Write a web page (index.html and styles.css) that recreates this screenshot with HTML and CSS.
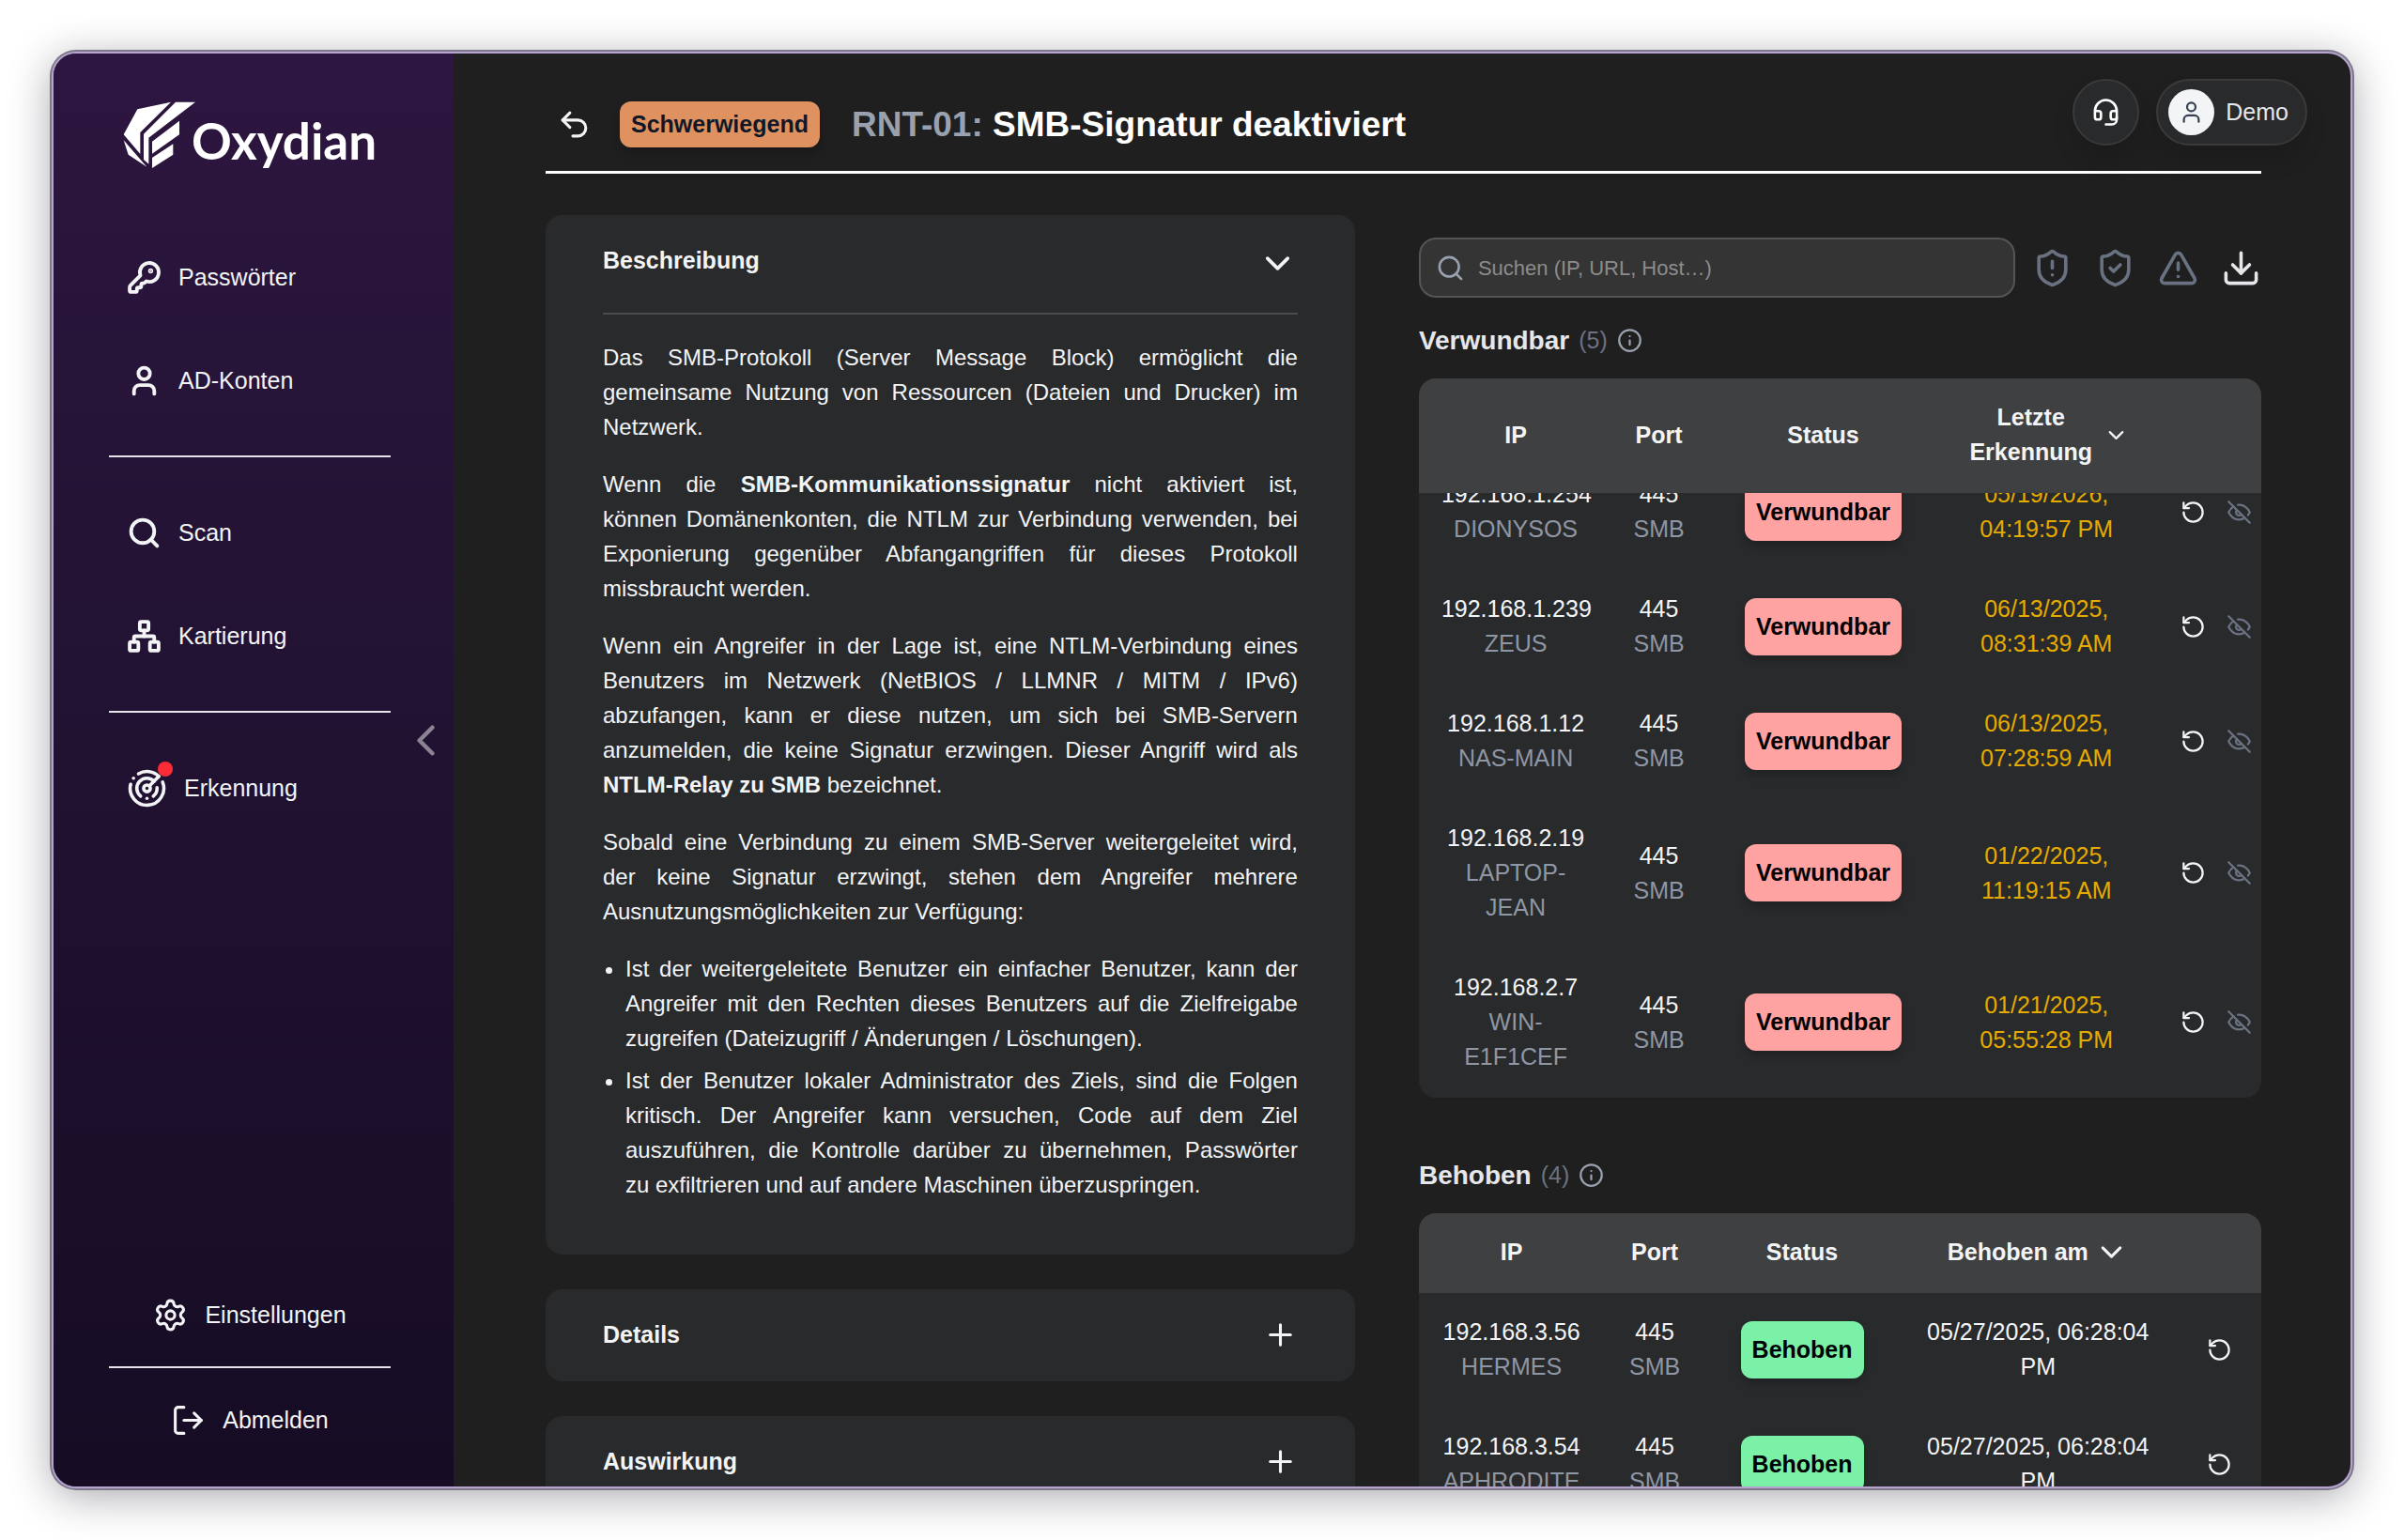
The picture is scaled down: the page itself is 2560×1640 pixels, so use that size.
FILE: index.html
```html
<!DOCTYPE html>
<html lang="de">
<head>
  <meta charset="UTF-8" />
  <meta name="viewport" content="width=device-width, initial-scale=1.0" />
  <title>Oxydian – SMB-Signatur deaktiviert</title>
  <link rel="stylesheet" href="styles.css">
</head>
<body>

  <svg class="sprite" aria-hidden="true">
    <symbol id="i-key" viewBox="0 0 24 24">
      <path d="M2.586 17.414A2 2 0 0 0 2 18.828V21a1 1 0 0 0 1 1h3a1 1 0 0 0 1-1v-1a1 1 0 0 1 1-1h1a1 1 0 0 0 1-1v-1a1 1 0 0 1 1-1h.172a2 2 0 0 0 1.414-.586l.814-.814a6.5 6.5 0 1 0-4-4z" />
      <circle cx="16.5" cy="7.5" r=".5" fill="currentColor" />
    </symbol>
    <symbol id="i-user" viewBox="0 0 24 24">
      <path d="M19 21v-2a4 4 0 0 0-4-4H9a4 4 0 0 0-4 4v2" />
      <circle cx="12" cy="7" r="4" />
    </symbol>
    <symbol id="i-search" viewBox="0 0 24 24">
      <circle cx="11" cy="11" r="8" />
      <path d="m21 21-4.35-4.35" />
    </symbol>
    <symbol id="i-network" viewBox="0 0 24 24">
      <rect x="16" y="16" width="6" height="6" rx="1" />
      <rect x="2" y="16" width="6" height="6" rx="1" />
      <rect x="9" y="2" width="6" height="6" rx="1" />
      <path d="M5 16v-3a1 1 0 0 1 1-1h12a1 1 0 0 1 1 1v3" />
      <path d="M12 12V8" />
    </symbol>
    <symbol id="i-radar" viewBox="0 0 24 24">
      <path d="M19.07 4.93A10 10 0 0 0 6.99 3.34" />
      <path d="M4 6h.01" />
      <path d="M2.29 9.62A10 10 0 1 0 21.31 8.35" />
      <path d="M16.24 7.76A6 6 0 1 0 8.23 16.67" />
      <path d="M12 18h.01" />
      <path d="M17.99 11.66A6 6 0 0 1 15.77 16.67" />
      <circle cx="12" cy="12" r="2" />
      <path d="m13.41 10.59 5.66-5.66" />
    </symbol>
    <symbol id="i-settings" viewBox="0 0 24 24">
      <path d="M9.671 4.136a2.34 2.34 0 0 1 4.659 0 2.34 2.34 0 0 0 3.319 1.915 2.34 2.34 0 0 1 2.33 4.033 2.34 2.34 0 0 0 0 3.831 2.34 2.34 0 0 1-2.33 4.033 2.34 2.34 0 0 0-3.319 1.915 2.34 2.34 0 0 1-4.659 0 2.34 2.34 0 0 0-3.32-1.915 2.34 2.34 0 0 1-2.33-4.033 2.34 2.34 0 0 0 0-3.831A2.34 2.34 0 0 1 6.35 6.051a2.34 2.34 0 0 0 3.319-1.915" />
      <circle cx="12" cy="12" r="3" />
    </symbol>
    <symbol id="i-logout" viewBox="0 0 24 24">
      <path d="M9 21H5a2 2 0 0 1-2-2V5a2 2 0 0 1 2-2h4" />
      <path d="m16 17 5-5-5-5" />
      <path d="M21 12H9" />
    </symbol>
    <symbol id="i-left" viewBox="0 0 24 24"><path d="m15 18-6-6 6-6" /></symbol>
    <symbol id="i-down" viewBox="0 0 24 24"><path d="m6 9 6 6 6-6" /></symbol>
    <symbol id="i-plus" viewBox="0 0 24 24"><path d="M5 12h14M12 5v14" /></symbol>
    <symbol id="i-undo" viewBox="0 0 24 24">
      <path d="M9 14 4 9l5-5" />
      <path d="M4 9h10.5a5.5 5.5 0 0 1 0 11H11" />
    </symbol>
    <symbol id="i-headset" viewBox="0 0 24 24">
      <path d="M3 11h3a2 2 0 0 1 2 2v3a2 2 0 0 1-2 2H5a2 2 0 0 1-2-2v-5Zm0 0a9 9 0 1 1 18 0m0 0v5a2 2 0 0 1-2 2h-1a2 2 0 0 1-2-2v-3a2 2 0 0 1 2-2h3Z" />
      <path d="M21 16v2a4 4 0 0 1-4 4h-5" />
    </symbol>
    <symbol id="i-shield" viewBox="0 0 24 24">
      <path d="M20 13c0 5-3.5 7.5-7.66 8.95a1 1 0 0 1-.67-.01C7.5 20.5 4 18 4 13V6a1 1 0 0 1 1-1c2 0 4.5-1.2 6.24-2.72a1.17 1.17 0 0 1 1.52 0C14.51 3.81 17 5 19 5a1 1 0 0 1 1 1z" />
    </symbol>
    <symbol id="i-triangle" viewBox="0 0 24 24">
      <path d="m21.73 18-8-14a2 2 0 0 0-3.48 0l-8 14A2 2 0 0 0 4 21h16a2 2 0 0 0 1.73-3" />
      <path d="M12 9v4M12 17h.01" />
    </symbol>
    <symbol id="i-download" viewBox="0 0 24 24">
      <path d="M12 15V3" />
      <path d="M21 15v4a2 2 0 0 1-2 2H5a2 2 0 0 1-2-2v-4" />
      <path d="m7 10 5 5 5-5" />
    </symbol>
    <symbol id="i-info" viewBox="0 0 24 24">
      <circle cx="12" cy="12" r="10" />
      <path d="M12 16v-4M12 8h.01" />
    </symbol>
    <symbol id="i-reset" viewBox="0 0 24 24">
      <path d="M3 12a9 9 0 1 0 9-9 9.75 9.75 0 0 0-6.74 2.74L3 8" />
      <path d="M3 3v5h5" />
    </symbol>
    <symbol id="i-eye-off" viewBox="0 0 24 24">
      <path d="M9.88 9.88a3 3 0 1 0 4.24 4.24" />
      <path d="M10.73 5.08A10.43 10.43 0 0 1 12 5c7 0 10 7 10 7a13.16 13.16 0 0 1-1.67 2.68" />
      <path d="M6.61 6.61A13.526 13.526 0 0 0 2 12s3 7 10 7a9.74 9.74 0 0 0 5.39-1.61" />
      <path d="m2 2 20 20" />
    </symbol>
  </svg>

  <div class="window">
    <aside class="sidebar">
      <a class="logo" href="#" aria-label="Oxydian">
        <svg class="logo-mark" viewBox="274 204 234 216">
          <path d="M427 206 320 229 276 310 329 372V303Z" />
          <path d="M276 328 350 413 291 374Z" />
          <path d="M442 206H505L356 320V404L340 390V308Z" />
          <path d="M454 266V310L367 371V332Z" />
          <path d="M434 340V374L367 417V384Z" />
        </svg>
        <span class="logo-text">Oxydian</span>
      </a>

      <nav class="nav">
        <a class="nav-item" href="#"><svg class="icon bold"><use href="#i-key" /></svg>Passwörter</a>
        <a class="nav-item" href="#"><svg class="icon bold"><use href="#i-user" /></svg>AD-Konten</a>
        <hr class="nav-line">
        <a class="nav-item" href="#"><svg class="icon bold"><use href="#i-search" /></svg>Scan</a>
        <a class="nav-item" href="#"><svg class="icon bold"><use href="#i-network" /></svg>Kartierung</a>
        <hr class="nav-line">
        <a class="nav-item" href="#">
          <span class="radar">
            <svg class="icon large"><use href="#i-radar" /></svg>
            <span class="dot"></span>
          </span>
          Erkennung
        </a>
      </nav>

      <div class="nav-bottom">
        <a class="nav-item" href="#"><svg class="icon"><use href="#i-settings" /></svg>Einstellungen</a>
        <hr class="nav-line">
        <a class="nav-item" href="#"><svg class="icon"><use href="#i-logout" /></svg>Abmelden</a>
      </div>

      <button class="collapse" type="button" aria-label="Menü einklappen"><svg class="icon"><use href="#i-left" /></svg></button>
    </aside>

    <div class="account-bar">
      <button class="support" type="button" aria-label="Support"><svg class="icon"><use href="#i-headset" /></svg></button>
      <button class="account" type="button">
        <span class="avatar"><svg class="icon small"><use href="#i-user" /></svg></span>
        Demo
      </button>
    </div>

    <main class="page">
      <header class="page-header">
        <button class="back" type="button" aria-label="Zurück"><svg class="icon"><use href="#i-undo" /></svg></button>
        <span class="badge severity">Schwerwiegend</span>
        <h1><span class="ref">RNT-01:</span> SMB-Signatur deaktiviert</h1>
      </header>

      <div class="columns">
        <div class="sections">
          <section class="card">
            <button class="card-head" type="button" aria-expanded="true">Beschreibung <svg class="icon large"><use href="#i-down" /></svg></button>
            <div class="card-body">
              <p>Das SMB-Protokoll (Server Message Block) ermöglicht die gemeinsame Nutzung von Ressourcen (Dateien und Drucker) im Netzwerk.</p>
              <p>Wenn die <strong>SMB-Kommunikationssignatur</strong> nicht aktiviert ist, können&nbsp;Domänenkonten, die NTLM zur Verbindung verwenden, bei Exponierung gegenüber Abfangangriffen für dieses Protokoll missbraucht werden.</p>
              <p>Wenn ein Angreifer in der Lage ist, eine NTLM-Verbindung eines Benutzers im Netzwerk (NetBIOS / LLMNR / MITM / IPv6) abzufangen, kann er diese nutzen, um sich bei SMB-Servern anzumelden, die keine Signatur erzwingen. Dieser Angriff wird als <strong>NTLM-Relay zu SMB</strong> bezeichnet.</p>
              <p>Sobald eine Verbindung zu einem SMB-Server weitergeleitet wird, der keine Signatur erzwingt, stehen dem Angreifer mehrere Ausnutzungsmöglichkeiten zur Verfügung:</p>
              <ul>
                <li>Ist der weitergeleitete Benutzer ein einfacher Benutzer, kann der Angreifer mit den Rechten dieses Benutzers auf die Zielfreigabe zugreifen (Dateizugriff / Änderungen / Löschungen).</li>
                <li>Ist der Benutzer lokaler Administrator des Ziels, sind die Folgen kritisch. Der Angreifer kann versuchen, Code auf dem Ziel auszuführen, die Kontrolle darüber zu übernehmen, Passwörter zu&nbsp;exfiltrieren und auf andere Maschinen überzuspringen.</li>
              </ul>
            </div>
          </section>
          <section class="card">
            <button class="card-head" type="button" aria-expanded="false">Details <svg class="icon"><use href="#i-plus" /></svg></button>
          </section>
          <section class="card">
            <button class="card-head" type="button" aria-expanded="false">Auswirkung <svg class="icon"><use href="#i-plus" /></svg></button>
          </section>
        </div>

        <div class="assets">
          <div class="toolbar">
            <label class="search">
              <svg class="icon"><use href="#i-search" /></svg>
              <input type="text" placeholder="Suchen (IP, URL, Host…)" aria-label="Suchen">
            </label>
            <div class="filters">
              <button type="button" aria-label="Verwundbar"><svg class="icon large" viewBox="0 0 24 24"><use href="#i-shield" /><path d="M12 8v4M12 16h.01" /></svg></button>
              <button type="button" aria-label="Behoben"><svg class="icon large" viewBox="0 0 24 24"><use href="#i-shield" /><path d="m9 12 2 2 4-4" /></svg></button>
              <button type="button" aria-label="Warnungen"><svg class="icon large"><use href="#i-triangle" /></svg></button>
              <button class="download" type="button" aria-label="Herunterladen"><svg class="icon large"><use href="#i-download" /></svg></button>
            </div>
          </div>

          <h2>Verwundbar <span class="count">(5)</span> <svg class="icon small"><use href="#i-info" /></svg></h2>
          <div class="table-box" id="vulnerable">
            <table>
              <colgroup><col class="v-ip"><col class="v-port"><col class="v-status"><col class="v-date"><col></colgroup>
              <thead>
                <tr>
                  <th>IP</th>
                  <th>Port</th>
                  <th>Status</th>
                  <th><button class="sort" type="button"><span>Letzte Erkennung</span><svg class="icon small"><use href="#i-down" /></svg></button></th>
                  <th></th>
                </tr>
              </thead>
              <tbody>
                <tr>
                  <td>192.168.1.254<br><span class="muted">DIONYSOS</span></td>
                  <td>445<br><span class="muted">SMB</span></td>
                  <td><span class="badge vulnerable">Verwundbar</span></td>
                  <td class="late">05/19/2026, 04:19:57 PM</td>
                  <td class="actions"><div><button type="button" aria-label="Erneut prüfen"><svg class="icon small"><use href="#i-reset" /></svg></button><button class="dim" type="button" aria-label="Ausblenden"><svg class="icon small"><use href="#i-eye-off" /></svg></button></div></td>
                </tr>
                <tr>
                  <td>192.168.1.239<br><span class="muted">ZEUS</span></td>
                  <td>445<br><span class="muted">SMB</span></td>
                  <td><span class="badge vulnerable">Verwundbar</span></td>
                  <td class="late">06/13/2025, 08:31:39 AM</td>
                  <td class="actions"><div><button type="button" aria-label="Erneut prüfen"><svg class="icon small"><use href="#i-reset" /></svg></button><button class="dim" type="button" aria-label="Ausblenden"><svg class="icon small"><use href="#i-eye-off" /></svg></button></div></td>
                </tr>
                <tr>
                  <td>192.168.1.12<br><span class="muted">NAS-MAIN</span></td>
                  <td>445<br><span class="muted">SMB</span></td>
                  <td><span class="badge vulnerable">Verwundbar</span></td>
                  <td class="late">06/13/2025, 07:28:59 AM</td>
                  <td class="actions"><div><button type="button" aria-label="Erneut prüfen"><svg class="icon small"><use href="#i-reset" /></svg></button><button class="dim" type="button" aria-label="Ausblenden"><svg class="icon small"><use href="#i-eye-off" /></svg></button></div></td>
                </tr>
                <tr>
                  <td>192.168.2.19<br><span class="muted">LAPTOP-JEAN</span></td>
                  <td>445<br><span class="muted">SMB</span></td>
                  <td><span class="badge vulnerable">Verwundbar</span></td>
                  <td class="late">01/22/2025, 11:19:15 AM</td>
                  <td class="actions"><div><button type="button" aria-label="Erneut prüfen"><svg class="icon small"><use href="#i-reset" /></svg></button><button class="dim" type="button" aria-label="Ausblenden"><svg class="icon small"><use href="#i-eye-off" /></svg></button></div></td>
                </tr>
                <tr>
                  <td>192.168.2.7<br><span class="muted">WIN-E1F1CEF</span></td>
                  <td>445<br><span class="muted">SMB</span></td>
                  <td><span class="badge vulnerable">Verwundbar</span></td>
                  <td class="late">01/21/2025, 05:55:28 PM</td>
                  <td class="actions"><div><button type="button" aria-label="Erneut prüfen"><svg class="icon small"><use href="#i-reset" /></svg></button><button class="dim" type="button" aria-label="Ausblenden"><svg class="icon small"><use href="#i-eye-off" /></svg></button></div></td>
                </tr>
              </tbody>
            </table>
          </div>

          <h2>Behoben <span class="count">(4)</span> <svg class="icon small"><use href="#i-info" /></svg></h2>
          <div class="table-box">
            <table>
              <colgroup><col class="f-ip"><col class="f-port"><col class="f-status"><col class="f-date"><col></colgroup>
              <thead>
                <tr>
                  <th>IP</th>
                  <th>Port</th>
                  <th>Status</th>
                  <th><button class="sort" type="button"><span>Behoben am</span><svg class="icon"><use href="#i-down" /></svg></button></th>
                  <th></th>
                </tr>
              </thead>
              <tbody>
                <tr>
                  <td>192.168.3.56<br><span class="muted">HERMES</span></td>
                  <td>445<br><span class="muted">SMB</span></td>
                  <td><span class="badge fixed">Behoben</span></td>
                  <td>05/27/2025, 06:28:04 PM</td>
                  <td class="actions single"><div><button type="button" aria-label="Erneut prüfen"><svg class="icon small"><use href="#i-reset" /></svg></button></div></td>
                </tr>
                <tr>
                  <td>192.168.3.54<br><span class="muted">APHRODITE</span></td>
                  <td>445<br><span class="muted">SMB</span></td>
                  <td><span class="badge fixed">Behoben</span></td>
                  <td>05/27/2025, 06:28:04 PM</td>
                  <td class="actions single"><div><button type="button" aria-label="Erneut prüfen"><svg class="icon small"><use href="#i-reset" /></svg></button></div></td>
                </tr>
              </tbody>
            </table>
          </div>
        </div>
      </div>
    </main>
  </div>

  <script>
    // show the end of the list first
    const list = document.getElementById('vulnerable');
    list.scrollTop = list.scrollHeight;
  </script>

</body>
</html>
```
FILE: styles.css
```css
* {
  box-sizing: border-box;
}

body {
  margin: 0;
  padding: 55px;
  height: 100vh;
  background: #fff;
  color: #f3f4f6;
  font-family: "Liberation Sans", Arial, sans-serif;
  font-size: 25px;
  line-height: 37px;
  overflow: hidden;
}

button {
  border: none;
  background: none;
  padding: 0;
  color: inherit;
  font: inherit;
  cursor: pointer;
}

a {
  color: inherit;
  text-decoration: none;
}

h1, h2, p, ul {
  margin: 0;
}

.sprite {
  display: none;
}

.icon {
  display: block;
  flex: none;
  width: 37px;
  height: 37px;
  fill: none;
  stroke: currentColor;
  stroke-width: 2;
  stroke-linecap: round;
  stroke-linejoin: round;
}

.icon.bold {
  stroke-width: 2.5;
}

.icon.large {
  width: 43px;
  height: 43px;
}

.icon.small {
  width: 27px;
  height: 27px;
}

.window {
  position: relative;
  display: flex;
  height: 100%;
  border: 2px solid #b5a4d0;
  border-radius: 26px;
  background: #1f1f1f;
  box-shadow: 0 0 0 2px #807889, 0 8px 45px rgba(24, 20, 40, 0.38);
  overflow: hidden;
}

/* sidebar */

.sidebar {
  position: relative;
  flex: none;
  display: flex;
  flex-direction: column;
  width: 426px;
  padding: 51px 67px 34px 59px;
  background: linear-gradient(#2d1640, #241335 35%, #160c24);
}

.logo {
  display: flex;
  margin-left: 15px;
  height: 72px;
}

.logo-mark {
  width: 78px;
  height: 72px;
  fill: #fff;
}

.logo-text {
  margin: 10px 0 0 -5px;
  color: #fff;
  font: bold 53px/64px Lato, sans-serif;
}

.nav {
  display: flex;
  flex-direction: column;
  gap: 36px;
  margin-top: 78px;
}

.nav-item {
  display: flex;
  align-items: center;
  gap: 18px;
  min-height: 74px;
  padding-left: 19px;
}

.nav-line {
  width: 100%;
  height: 2px;
  margin: 7px 0;
  border: none;
  background: #e6e3ea;
}

.radar {
  position: relative;
}

.dot {
  position: absolute;
  top: -7px;
  right: -6px;
  width: 16px;
  height: 16px;
  border-radius: 50%;
  background: #fb2c36;
}

.nav-bottom {
  margin-top: auto;
}

.nav-bottom .nav-item {
  justify-content: center;
  padding: 0;
}

.nav-bottom .nav-line {
  margin: 18px 0;
}

.collapse {
  position: absolute;
  top: 48%;
  right: 2px;
  margin-top: -28px;
  opacity: 0.5;
}

.collapse .icon {
  width: 55px;
  height: 55px;
}

/* account */

.account-bar {
  position: absolute;
  top: 27px;
  right: 46px;
  display: flex;
  gap: 18px;
}

.support, .account {
  display: flex;
  align-items: center;
  justify-content: center;
  height: 71px;
  border: 2px solid #3a3a3b;
  border-radius: 36px;
  background: #292a2c;
  color: #e5e7eb;
  box-shadow: 0 15px 23px rgba(0, 0, 0, 0.12);
}

.support {
  width: 71px;
  color: #fff;
}

.support .icon {
  width: 31px;
  height: 31px;
}

.account {
  gap: 12px;
  padding: 0 18px 0 11px;
}

.avatar {
  display: flex;
  align-items: center;
  justify-content: center;
  width: 49px;
  height: 49px;
  border-radius: 50%;
  background: #f3f4f6;
  color: #364153;
}

/* page */

.page {
  flex: 1;
  min-width: 0;
  padding: 51px 95px 0 98px;
  overflow: hidden;
}

.page-header {
  display: flex;
  align-items: center;
  padding: 0 0 25px 12px;
  border-bottom: 3px solid #fff;
}

h1 {
  margin-left: 34px;
  color: #fff;
  font-size: 37px;
  line-height: 49px;
}

.ref {
  color: #99a1af;
}

.badge {
  display: inline-block;
  padding: 12px;
  border-radius: 12px;
  color: #000;
  font-weight: bold;
  box-shadow: 0 6px 9px rgba(0, 0, 0, 0.2);
}

.severity {
  margin-left: 30px;
  padding: 6px 12px;
  background: #df9260;
  color: #101828;
}

.vulnerable {
  background: #ffa2a2;
}

.fixed {
  background: #7bf1a8;
}

.columns {
  display: grid;
  grid-template-columns: 49fr 51fr;
  align-items: start;
  gap: 68px;
  margin-top: 44px;
}

.sections {
  display: grid;
  gap: 37px;
}

.card {
  border-radius: 18px;
  background: #292a2c;
  padding: 0 61px;
}

.card-head {
  display: flex;
  align-items: flex-start;
  justify-content: space-between;
  width: 100%;
  padding: 30px 0 31px;
  font-weight: bold;
  text-align: left;
}

.card-body {
  padding: 27px 0 56px;
  border-top: 2px solid #4a4b4d;
  font-size: 24px;
  text-align: justify;
}

.card-body p {
  margin-bottom: 24px;
}

.card-body ul {
  padding-left: 24px;
}

.card-body li + li {
  margin-top: 8px;
}

/* assets */

.assets {
  padding-top: 24px;
}

.toolbar {
  display: flex;
  align-items: center;
  gap: 18px;
}

.search {
  flex: 1;
  display: flex;
  align-items: center;
  gap: 12px;
  height: 64px;
  padding: 0 16px;
  border: 2px solid #545556;
  border-radius: 18px;
  background: #343434;
}

.search .icon {
  width: 31px;
  height: 31px;
  color: #99a1af;
}

.search input {
  flex: 1;
  min-width: 0;
  border: none;
  outline: none;
  background: none;
  color: inherit;
  font: inherit;
  font-size: 22px;
}

.search input::placeholder {
  color: #8c8c8c;
}

.filters {
  display: flex;
  gap: 24px;
  color: #6a7282;
}

.download {
  color: #e5e7eb;
}

h2 {
  display: flex;
  align-items: center;
  gap: 10px;
  margin: 27px 0 22px;
  color: #e5e7eb;
  font-size: 28px;
  line-height: 37px;
}

h2 .icon {
  color: #99a1af;
}

.count {
  color: #6a7282;
  font-size: 25px;
  font-weight: normal;
}

.table-box {
  max-height: 766px;
  margin-bottom: 64px;
  border-radius: 18px;
  background: #292a2c;
  overflow: auto;
  scrollbar-width: none;
}

table {
  width: 100%;
  border-collapse: collapse;
  table-layout: fixed;
  text-align: center;
}

.v-ip { width: 23%; }
.v-port { width: 11%; }
.v-status { width: 28%; }
.v-date { width: 25%; }

.f-ip { width: 22%; }
.f-port { width: 12%; }
.f-status { width: 23%; }
.f-date { width: 33%; }

th, td {
  padding: 23px 24px 25px;
}

th {
  position: sticky;
  top: 0;
  z-index: 1;
  background: #3f4041;
}

th:nth-child(2), td:nth-child(2) {
  padding-left: 0;
  padding-right: 0;
}

.muted {
  color: #8f96a4;
}

.late {
  color: #e6ab00;
}

.sort {
  display: flex;
  align-items: center;
  justify-content: center;
  gap: 6px;
  width: 100%;
  font-weight: bold;
}

.actions {
  padding-left: 0;
  padding-right: 10px;
}

.actions div {
  display: flex;
  justify-content: flex-end;
  gap: 22px;
}

.actions.single {
  padding-right: 0;
}

.single div {
  justify-content: center;
}

.dim {
  color: #6a7282;
}
```
